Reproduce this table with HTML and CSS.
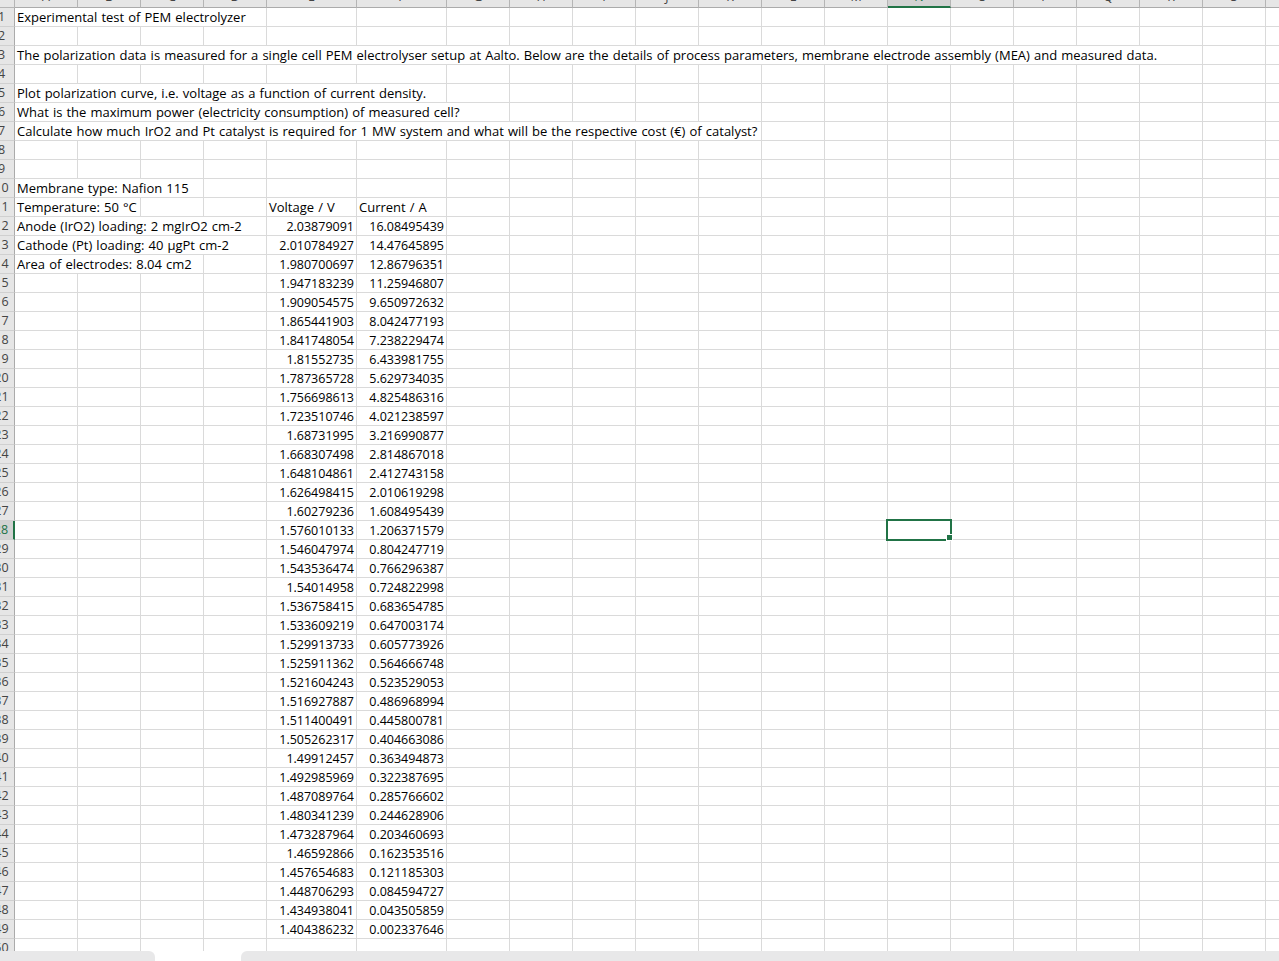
FILE: index.html
```html
<!DOCTYPE html>
<html lang="en">
<head>
<meta charset="utf-8">
<title>Experimental test of PEM electrolyzer</title>
<link rel="stylesheet" href="styles.css">
</head>
<body>
<div class="app">
<div class="viewport">
<div class="grid">
<i class="corner"></i><i class="ch">A</i><i class="ch">B</i><i class="ch">C</i><i class="ch">D</i><i class="ch">E</i><i class="ch">F</i><i class="ch">G</i><i class="ch">H</i><i class="ch">I</i><i class="ch">J</i><i class="ch">K</i><i class="ch">L</i><i class="ch">M</i><i class="ch csel">N</i><i class="ch">O</i><i class="ch">P</i><i class="ch">Q</i><i class="ch">R</i><i class="ch">S</i><i class="ch">T</i>
<i class="rh">1</i><i class="s4">Experimental test of PEM electrolyzer</i><i></i><i></i><i></i><i></i><i></i><i></i><i></i><i></i><i></i><i></i><i></i><i></i><i></i><i></i><i></i><i></i>
<i class="rh">2</i><i></i><i></i><i></i><i></i><i></i><i></i><i></i><i></i><i></i><i></i><i></i><i></i><i></i><i></i><i></i><i></i><i></i><i></i><i></i><i></i>
<i class="rh">3</i><i class="s18">The polarization data is measured for a single cell PEM electrolyser setup at Aalto. Below are the details of process parameters, membrane electrode assembly (MEA) and measured data.</i><i></i><i></i>
<i class="rh">4</i><i></i><i></i><i></i><i></i><i></i><i></i><i></i><i></i><i></i><i></i><i></i><i></i><i></i><i></i><i></i><i></i><i></i><i></i><i></i><i></i>
<i class="rh">5</i><i class="s6">Plot polarization curve, i.e. voltage as a function of current density.</i><i></i><i></i><i></i><i></i><i></i><i></i><i></i><i></i><i></i><i></i><i></i><i></i><i></i><i></i>
<i class="rh">6</i><i class="s7">What is the maximum power (electricity consumption) of measured cell?</i><i></i><i></i><i></i><i></i><i></i><i></i><i></i><i></i><i></i><i></i><i></i><i></i><i></i>
<i class="rh">7</i><i class="s11">Calculate how much IrO2 and Pt catalyst is required for 1 MW system and what will be the respective cost (€) of catalyst?</i><i></i><i></i><i></i><i></i><i></i><i></i><i></i><i></i><i></i>
<i class="rh">8</i><i></i><i></i><i></i><i></i><i></i><i></i><i></i><i></i><i></i><i></i><i></i><i></i><i></i><i></i><i></i><i></i><i></i><i></i><i></i><i></i>
<i class="rh">9</i><i></i><i></i><i></i><i></i><i></i><i></i><i></i><i></i><i></i><i></i><i></i><i></i><i></i><i></i><i></i><i></i><i></i><i></i><i></i><i></i>
<i class="rh">10</i><i class="s3">Membrane type: Nafion 115</i><i></i><i></i><i></i><i></i><i></i><i></i><i></i><i></i><i></i><i></i><i></i><i></i><i></i><i></i><i></i><i></i><i></i>
<i class="rh">11</i><i class="s2">Temperature: 50 °C</i><i></i><i></i><i>Voltage / V</i><i>Current / A</i><i></i><i></i><i></i><i></i><i></i><i></i><i></i><i></i><i></i><i></i><i></i><i></i><i></i><i></i>
<i class="rh">12</i><i class="s4">Anode (IrO2) loading: 2 mgIrO2 cm-2</i><i class="n">2.03879091</i><i class="n">16.08495439</i><i></i><i></i><i></i><i></i><i></i><i></i><i></i><i></i><i></i><i></i><i></i><i></i><i></i><i></i>
<i class="rh">13</i><i class="s4">Cathode (Pt) loading: 40 µgPt cm-2</i><i class="n">2.010784927</i><i class="n">14.47645895</i><i></i><i></i><i></i><i></i><i></i><i></i><i></i><i></i><i></i><i></i><i></i><i></i><i></i><i></i>
<i class="rh">14</i><i class="s3">Area of electrodes: 8.04 cm2</i><i></i><i class="n">1.980700697</i><i class="n">12.86796351</i><i></i><i></i><i></i><i></i><i></i><i></i><i></i><i></i><i></i><i></i><i></i><i></i><i></i><i></i>
<i class="rh">15</i><i></i><i></i><i></i><i></i><i class="n">1.947183239</i><i class="n">11.25946807</i><i></i><i></i><i></i><i></i><i></i><i></i><i></i><i></i><i></i><i></i><i></i><i></i><i></i><i></i>
<i class="rh">16</i><i></i><i></i><i></i><i></i><i class="n">1.909054575</i><i class="n">9.650972632</i><i></i><i></i><i></i><i></i><i></i><i></i><i></i><i></i><i></i><i></i><i></i><i></i><i></i><i></i>
<i class="rh">17</i><i></i><i></i><i></i><i></i><i class="n">1.865441903</i><i class="n">8.042477193</i><i></i><i></i><i></i><i></i><i></i><i></i><i></i><i></i><i></i><i></i><i></i><i></i><i></i><i></i>
<i class="rh">18</i><i></i><i></i><i></i><i></i><i class="n">1.841748054</i><i class="n">7.238229474</i><i></i><i></i><i></i><i></i><i></i><i></i><i></i><i></i><i></i><i></i><i></i><i></i><i></i><i></i>
<i class="rh">19</i><i></i><i></i><i></i><i></i><i class="n">1.81552735</i><i class="n">6.433981755</i><i></i><i></i><i></i><i></i><i></i><i></i><i></i><i></i><i></i><i></i><i></i><i></i><i></i><i></i>
<i class="rh">20</i><i></i><i></i><i></i><i></i><i class="n">1.787365728</i><i class="n">5.629734035</i><i></i><i></i><i></i><i></i><i></i><i></i><i></i><i></i><i></i><i></i><i></i><i></i><i></i><i></i>
<i class="rh">21</i><i></i><i></i><i></i><i></i><i class="n">1.756698613</i><i class="n">4.825486316</i><i></i><i></i><i></i><i></i><i></i><i></i><i></i><i></i><i></i><i></i><i></i><i></i><i></i><i></i>
<i class="rh">22</i><i></i><i></i><i></i><i></i><i class="n">1.723510746</i><i class="n">4.021238597</i><i></i><i></i><i></i><i></i><i></i><i></i><i></i><i></i><i></i><i></i><i></i><i></i><i></i><i></i>
<i class="rh">23</i><i></i><i></i><i></i><i></i><i class="n">1.68731995</i><i class="n">3.216990877</i><i></i><i></i><i></i><i></i><i></i><i></i><i></i><i></i><i></i><i></i><i></i><i></i><i></i><i></i>
<i class="rh">24</i><i></i><i></i><i></i><i></i><i class="n">1.668307498</i><i class="n">2.814867018</i><i></i><i></i><i></i><i></i><i></i><i></i><i></i><i></i><i></i><i></i><i></i><i></i><i></i><i></i>
<i class="rh">25</i><i></i><i></i><i></i><i></i><i class="n">1.648104861</i><i class="n">2.412743158</i><i></i><i></i><i></i><i></i><i></i><i></i><i></i><i></i><i></i><i></i><i></i><i></i><i></i><i></i>
<i class="rh">26</i><i></i><i></i><i></i><i></i><i class="n">1.626498415</i><i class="n">2.010619298</i><i></i><i></i><i></i><i></i><i></i><i></i><i></i><i></i><i></i><i></i><i></i><i></i><i></i><i></i>
<i class="rh">27</i><i></i><i></i><i></i><i></i><i class="n">1.60279236</i><i class="n">1.608495439</i><i></i><i></i><i></i><i></i><i></i><i></i><i></i><i></i><i></i><i></i><i></i><i></i><i></i><i></i>
<i class="rh rsel">28</i><i></i><i></i><i></i><i></i><i class="n">1.576010133</i><i class="n">1.206371579</i><i></i><i></i><i></i><i></i><i></i><i></i><i></i><i class="cur"></i><i></i><i></i><i></i><i></i><i></i><i></i>
<i class="rh">29</i><i></i><i></i><i></i><i></i><i class="n">1.546047974</i><i class="n">0.804247719</i><i></i><i></i><i></i><i></i><i></i><i></i><i></i><i></i><i></i><i></i><i></i><i></i><i></i><i></i>
<i class="rh">30</i><i></i><i></i><i></i><i></i><i class="n">1.543536474</i><i class="n">0.766296387</i><i></i><i></i><i></i><i></i><i></i><i></i><i></i><i></i><i></i><i></i><i></i><i></i><i></i><i></i>
<i class="rh">31</i><i></i><i></i><i></i><i></i><i class="n">1.54014958</i><i class="n">0.724822998</i><i></i><i></i><i></i><i></i><i></i><i></i><i></i><i></i><i></i><i></i><i></i><i></i><i></i><i></i>
<i class="rh">32</i><i></i><i></i><i></i><i></i><i class="n">1.536758415</i><i class="n">0.683654785</i><i></i><i></i><i></i><i></i><i></i><i></i><i></i><i></i><i></i><i></i><i></i><i></i><i></i><i></i>
<i class="rh">33</i><i></i><i></i><i></i><i></i><i class="n">1.533609219</i><i class="n">0.647003174</i><i></i><i></i><i></i><i></i><i></i><i></i><i></i><i></i><i></i><i></i><i></i><i></i><i></i><i></i>
<i class="rh">34</i><i></i><i></i><i></i><i></i><i class="n">1.529913733</i><i class="n">0.605773926</i><i></i><i></i><i></i><i></i><i></i><i></i><i></i><i></i><i></i><i></i><i></i><i></i><i></i><i></i>
<i class="rh">35</i><i></i><i></i><i></i><i></i><i class="n">1.525911362</i><i class="n">0.564666748</i><i></i><i></i><i></i><i></i><i></i><i></i><i></i><i></i><i></i><i></i><i></i><i></i><i></i><i></i>
<i class="rh">36</i><i></i><i></i><i></i><i></i><i class="n">1.521604243</i><i class="n">0.523529053</i><i></i><i></i><i></i><i></i><i></i><i></i><i></i><i></i><i></i><i></i><i></i><i></i><i></i><i></i>
<i class="rh">37</i><i></i><i></i><i></i><i></i><i class="n">1.516927887</i><i class="n">0.486968994</i><i></i><i></i><i></i><i></i><i></i><i></i><i></i><i></i><i></i><i></i><i></i><i></i><i></i><i></i>
<i class="rh">38</i><i></i><i></i><i></i><i></i><i class="n">1.511400491</i><i class="n">0.445800781</i><i></i><i></i><i></i><i></i><i></i><i></i><i></i><i></i><i></i><i></i><i></i><i></i><i></i><i></i>
<i class="rh">39</i><i></i><i></i><i></i><i></i><i class="n">1.505262317</i><i class="n">0.404663086</i><i></i><i></i><i></i><i></i><i></i><i></i><i></i><i></i><i></i><i></i><i></i><i></i><i></i><i></i>
<i class="rh">40</i><i></i><i></i><i></i><i></i><i class="n">1.49912457</i><i class="n">0.363494873</i><i></i><i></i><i></i><i></i><i></i><i></i><i></i><i></i><i></i><i></i><i></i><i></i><i></i><i></i>
<i class="rh">41</i><i></i><i></i><i></i><i></i><i class="n">1.492985969</i><i class="n">0.322387695</i><i></i><i></i><i></i><i></i><i></i><i></i><i></i><i></i><i></i><i></i><i></i><i></i><i></i><i></i>
<i class="rh">42</i><i></i><i></i><i></i><i></i><i class="n">1.487089764</i><i class="n">0.285766602</i><i></i><i></i><i></i><i></i><i></i><i></i><i></i><i></i><i></i><i></i><i></i><i></i><i></i><i></i>
<i class="rh">43</i><i></i><i></i><i></i><i></i><i class="n">1.480341239</i><i class="n">0.244628906</i><i></i><i></i><i></i><i></i><i></i><i></i><i></i><i></i><i></i><i></i><i></i><i></i><i></i><i></i>
<i class="rh">44</i><i></i><i></i><i></i><i></i><i class="n">1.473287964</i><i class="n">0.203460693</i><i></i><i></i><i></i><i></i><i></i><i></i><i></i><i></i><i></i><i></i><i></i><i></i><i></i><i></i>
<i class="rh">45</i><i></i><i></i><i></i><i></i><i class="n">1.46592866</i><i class="n">0.162353516</i><i></i><i></i><i></i><i></i><i></i><i></i><i></i><i></i><i></i><i></i><i></i><i></i><i></i><i></i>
<i class="rh">46</i><i></i><i></i><i></i><i></i><i class="n">1.457654683</i><i class="n">0.121185303</i><i></i><i></i><i></i><i></i><i></i><i></i><i></i><i></i><i></i><i></i><i></i><i></i><i></i><i></i>
<i class="rh">47</i><i></i><i></i><i></i><i></i><i class="n">1.448706293</i><i class="n">0.084594727</i><i></i><i></i><i></i><i></i><i></i><i></i><i></i><i></i><i></i><i></i><i></i><i></i><i></i><i></i>
<i class="rh">48</i><i></i><i></i><i></i><i></i><i class="n">1.434938041</i><i class="n">0.043505859</i><i></i><i></i><i></i><i></i><i></i><i></i><i></i><i></i><i></i><i></i><i></i><i></i><i></i><i></i>
<i class="rh">49</i><i></i><i></i><i></i><i></i><i class="n">1.404386232</i><i class="n">0.002337646</i><i></i><i></i><i></i><i></i><i></i><i></i><i></i><i></i><i></i><i></i><i></i><i></i><i></i><i></i>
<i class="rh">50</i><i></i><i></i><i></i><i></i><i></i><i></i><i></i><i></i><i></i><i></i><i></i><i></i><i></i><i></i><i></i><i></i><i></i><i></i><i></i><i></i>
</div>
</div>
<div class="bottom">
<div class="hscroll-left"></div>
<div class="bottom-gap"></div>
<div class="hscroll-right"></div>
</div>
</div>
</body>
</html>
```

FILE: styles.css
```css
html, body {
  margin: 0;
  padding: 0;
  height: 100%;
  overflow: hidden;
  background: #ffffff;
}

body {
  font-family: "Open Sans", "Noto Sans", sans-serif;
  font-size: 13px;
  word-spacing: 0.7px;
  color: #000000;
}

.app {
  display: flex;
  flex-direction: column;
  height: 961px;
}

.viewport {
  height: 951px;
  overflow: hidden;
  flex: none;
}

.grid {
  display: grid;
  grid-template-columns: 23px repeat(4, 63px) 90px 90px repeat(14, 63px);
  grid-template-rows: 21px;
  grid-auto-rows: 19px;
  margin: -13px 0 0 -8px;
  width: max-content;
}

.grid > i {
  font-style: normal;
  box-sizing: border-box;
  border-right: 1px solid #dadada;
  border-bottom: 1px solid #dadada;
  white-space: nowrap;
  overflow: hidden;
  line-height: 18px;
  padding: 0 2px;
}

.grid > .corner {
  background: #e6e6e6;
  border-right-color: #b5b5b5;
  border-bottom-color: #b5b5b5;
}

.grid > .ch {
  background: #e6e6e6;
  border-right-color: #b5b5b5;
  border-bottom-color: #ababab;
  color: #444444;
  text-align: center;
  line-height: 20px;
  font-size: 12.5px;
}

.grid > .csel {
  background: #d2d2d2;
  border-bottom: 2px solid #217346;
  color: #217346;
}

.grid > .rh {
  background: #e6e6e6;
  border-right-color: #ababab;
  border-bottom-color: #d0d0d0;
  color: #444444;
  text-align: center;
  font-size: 12.5px;
  padding: 0 3px 0 0;
}

.grid > .rsel {
  background: #d2d2d2;
  border-right: 2px solid #217346;
  color: #217346;
}

.grid > .n {
  text-align: right;
  font-size: 12.5px;
  line-height: 19px;
}

.s2 { grid-column: span 2; }
.s3 { grid-column: span 3; }
.s4 { grid-column: span 4; }
.s6 { grid-column: span 6; }
.s7 { grid-column: span 7; }
.s11 { grid-column: span 11; }
.s18 { grid-column: span 18; }

.grid > .cur {
  position: relative;
  overflow: visible;
  z-index: 1;
}

.cur::before {
  content: "";
  position: absolute;
  left: -2px;
  top: -2px;
  width: 66px;
  height: 22px;
  box-sizing: border-box;
  border: 2px solid #217346;
}

.cur::after {
  content: "";
  position: absolute;
  left: 58px;
  top: 13px;
  width: 5px;
  height: 5px;
  background: #217346;
  border: 1px solid #ffffff;
}

.bottom {
  display: flex;
  height: 10px;
  flex: none;
}

.hscroll-left {
  width: 155px;
  background: #e8e8e9;
  border-top-right-radius: 6px;
}

.bottom-gap {
  width: 86px;
}

.hscroll-right {
  flex: 1;
  background: #e8e8e9;
  border-top-left-radius: 6px;
}
```
